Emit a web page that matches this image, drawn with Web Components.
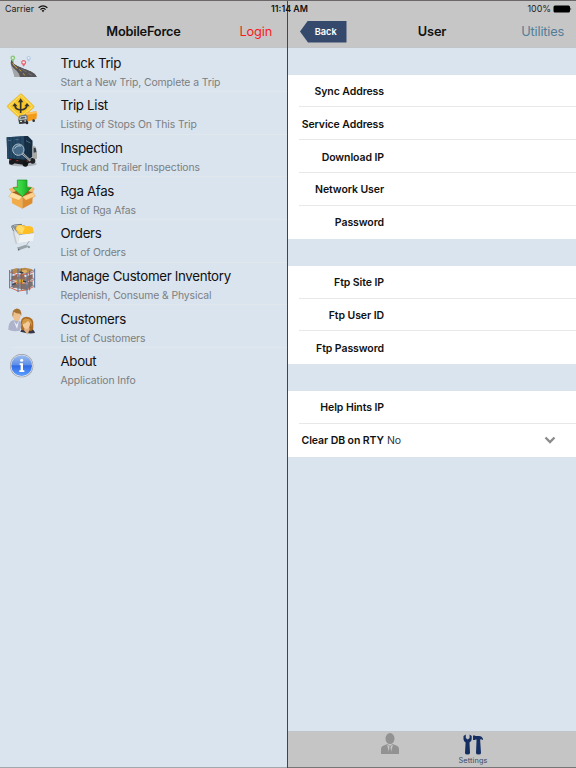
<!DOCTYPE html>
<html lang="en">
<head>
<meta charset="utf-8">
<title>MobileForce</title>
<style>
	body {
		margin: 0;
		background: #dae4ee;
		font-family: Inter, "Liberation Sans", sans-serif;
		color: #111;
	}
</style>
</head>
<body>
<mobile-app></mobile-app>

<script>
// 48x42 icons, drawn on a grid of thirds of a pixel
const icons = {
	road: `
		<path d="M34 36C29 50 35 58 48 65L60 87H110C105 72 84 68 66 60C47 52 36 47 40 39Z" fill="#514f51"/>
		<path d="M34 42C31 60 40 68 43 87H62C59 68 39 62 39 46Z" fill="#a3a5a7"/>
		<path d="M34 36C29 54 41 60 50 68Q58 76 60 87H110C105 72 84 68 66 60C47 52 36 47 40 39Z" fill="#565456"/>
		<path d="M38 45Q42 55 52 61M58 65L64 70M70 76L74 82" stroke="#d9a83a" stroke-width="3" fill="none"/>
		<path d="M63 62L80 72M85 76L96 82" stroke="#aaa" fill="none"/>
		<path d="M38 42L32 32A7 7 0 1 1 45 32Z" fill="#8bc77d"/><circle cx="38.500" cy="30" r="3" fill="#e4f2e5"/>
		<path d="M71 56L64 46A7.500 7.500 0 1 1 78 46Z" fill="#e56870"/><circle cx="71" cy="43" r="3.500" fill="#fae5e9"/>
		<path d="M86 42L80 33A6.500 6.500 0 1 1 92 33Z" fill="#b4cbe4"/><circle cx="86" cy="30" r="3" fill="#e8f3fc"/>`,
	trip: `
		<path d="M60 10Q63 7 66 10L101 44Q104 47 101 50L66 82Q62 86 58 82L23 49Q20 46 23 43Z" fill="#f8c82b" stroke="#ddaa28" stroke-width="1.500"/>
		<path d="M62 13L97 47L62 79L27 46Z" fill="none" stroke="#fff0a4" stroke-width="2"/>
		<path d="M62 66V31M62 57Q45 56 45 43M62 57Q81 55 81 42" fill="none" stroke="#36342c" stroke-width="5"/>
		<path d="M62 22L54 34H70ZM44 36L37 46H53ZM81 36L73 46H89Z" fill="#36342c"/>
		<path d="M75 66L109 61Q112 69 109 84L80 92Z" fill="#f39a19"/><path d="M75 66L109 61L110 67L78 72Z" fill="#ffc257"/>
		<path d="M57 74L77 70L83 75V96L58 99L54 86Z" fill="#777a7b"/>
		<path d="M60 77L78 75L80 84L58 86Z" fill="#d9e1e4"/><path d="M62 79L75 77L77 82L61 84Z" fill="#555c60"/>
		<path d="M57 88H81V96L58 99Z" fill="#383b3c"/><path d="M60 91H66M73 90H78" stroke="#fff" stroke-width="3"/>
		<ellipse cx="81" cy="95" rx="4" ry="5" fill="#252829"/><ellipse cx="101" cy="89" rx="4" ry="4" fill="#333"/>`,
	inspect: `
		<ellipse cx="68" cy="90" rx="42" ry="7" fill="#8e9195" opacity=".6"/>
		<path d="M20 10L83 6L97 20V68L76 82L22 74Z" fill="#203e58"/>
		<path d="M20 10L72 7V79L22 74Z" fill="#244865"/><path d="M72 7L83 6L97 20V68L76 82Z" fill="#162b3e"/>
		<path d="M29 10V73M38 10V74M47 9V76M61 8V77M79 9V79M86 12V73" stroke="#193850" stroke-width="2"/>
		<path d="M24 19H33M46 17H55M78 20L91 27" stroke="#6885a0" stroke-width="2"/>
		<path d="M97 35L107 38L111 54V74L97 76Z" fill="#a9aaa8"/><path d="M101 41L107 43L109 54L101 56Z" fill="#303d4b"/>
		<path d="M27 73L77 77L99 72V82L75 93L31 86Z" fill="#191b1e"/>
		<circle cx="35" cy="84" r="8" fill="#17191c"/><circle cx="76" cy="90" r="8" fill="#111518"/><circle cx="98" cy="81" r="8" fill="#202326"/>
		<path d="M27 77H34M49 80H55M80 81H85" stroke="#ba3730" stroke-width="3"/>
		<circle cx="55" cy="47" r="17" fill="#688eab" fill-opacity=".5" stroke="#b2bfc9" stroke-width="3"/>
		<path d="M44 44Q50 33 63 36" stroke="#adc8dc" stroke-width="3" fill="none"/><path d="M68 59L91 80" stroke="#c9ccce" stroke-width="6"/><path d="M69 60L91 80" stroke="#545b61" stroke-width="3"/>`,
	box: `
		<path d="M35 49L66 39L99 49L67 64Z" fill="#9d5b1d"/>
		<path d="M35 49L67 63V98L36 82Z" fill="#f2ac4b"/><path d="M99 49L67 63V98L97 82Z" fill="#de8d2e"/>
		<path d="M35 49L26 62L57 73L67 62Z" fill="#ffe0a0" stroke="#d59a4d"/>
		<path d="M99 49L106 61L78 73L67 62Z" fill="#ffd18a" stroke="#c98b42"/>
		<path d="M35 49L28 39L50 31L57 42ZM98 49L103 37L83 31L76 42Z" fill="#f4bb68" stroke="#cf9143"/>
		<path d="M52 12H81V35H94L67 62L39 35H52Z" fill="url(#green)" stroke="#159225" stroke-width="2"/>
		<defs><linearGradient id="green" x2="1" y2="0"><stop stop-color="#54e85a"/><stop offset=".5" stop-color="#35cf3c"/><stop offset="1" stop-color="#099920"/></linearGradient></defs>`,
	cart: `
		<path d="M35 22L72 18L104 44L99 66L44 75Z" fill="#dce1e5"/><path d="M35 22L72 18L104 44L59 49Z" fill="#8c9499"/>
		<path d="M42 36L59 49L104 42L99 64L50 73Z" fill="#e4e8eb" stroke="#c3cbd1"/>
		<path d="M48 31Q48 17 58 16L77 21L76 44L56 46Z" fill="#ffc742"/><path d="M65 42L76 22Q89 19 98 25L101 40L82 46Z" fill="#ffbf24"/><path d="M50 31Q52 18 62 19L74 28L66 44Z" fill="#ffdc67"/>
		<path d="M58 48L104 43L99 66L50 73Z" fill="#eff2f4"/>
		<path d="M59 49L53 71" stroke="#c6ced4" stroke-width="1.500"/>
		<path d="M34 22L43 18L66 16M35 23L41 37" stroke="#6d767c" stroke-width="3" fill="none"/>
		<path d="M40 39L49 74" stroke="#c0c7cc" stroke-width="4"/>
		<path d="M88 66L79 79L54 88" fill="none" stroke="#a4aeb5" stroke-width="3"/>
		<path d="M50 86L76 78L91 82L59 93Z" fill="#98a3a9"/><circle cx="56" cy="92" r="2.500" fill="#5f6970"/><circle cx="87" cy="85" r="2.500" fill="#707a80"/>`,
	rack: `
		<path d="M30 29L57 20L104 24L79 36ZM30 53L55 43L104 48L79 61ZM31 74L55 64L103 69L79 85Z" fill="#9b8276"/>
		<path d="M34 23L50 18L56 31L36 36ZM57 20L75 17L98 22L82 32L58 29Z" fill="#b98a4c"/><path d="M61 26L79 23L82 31L67 35Z" fill="#dfb264"/>
		<path d="M34 43L51 38V50L35 55ZM58 39L72 37L76 53L60 51ZM81 42L98 36V48L83 57Z" fill="#926a57"/>
		<path d="M49 54L64 50L73 58L65 67L49 66Z" fill="#e4a824"/><path d="M35 67L47 61L53 74L39 79ZM64 67L77 64L81 82L64 81ZM83 61L98 58V70L84 79Z" fill="#7f7069"/>
		<path d="M29 30L54 39L81 37L104 28M30 55L54 64L80 63L104 52M31 77L54 87L80 84L103 73" fill="none" stroke="#cf5636" stroke-width="2.500"/>
		<path d="M29 24V79M36 22V75M54 18V90M64 20V84M81 32V97M89 26V85M104 20V77" fill="none" stroke="#526f9d" stroke-width="3"/>
		<path d="M54 41L64 49L54 56L64 64L54 75M81 42L89 49L81 57L89 65L81 76" fill="none" stroke="#6b7590" stroke-width="1.500"/>
		<path d="M59 30L70 33M69 57L78 60M37 67L47 65" stroke="#373c49" stroke-width="4"/>`,
	people: `
		<path d="M25 77Q25 53 39 49H54Q64 52 65 62L59 80Q38 84 25 77Z" fill="#aeb2ca"/><path d="M41 50L50 62L57 49L51 75Z" fill="#edf0f6"/>
		<ellipse cx="50" cy="34" rx="12" ry="17" fill="#edc08d"/><path d="M38 39Q34 17 48 14Q65 12 64 36L60 29Q48 29 41 23Q41 32 38 39Z" fill="#a77332"/>
		<path d="M61 83Q62 76 74 71H90Q102 75 105 87Q87 91 61 83Z" fill="#363848"/>
		<path d="M64 63Q58 40 79 38Q104 39 100 67Q101 80 92 81L67 78Q60 77 64 63Z" fill="#ae6d25"/>
		<path d="M74 69L72 79L83 92L89 75L86 65Z" fill="#e5b181"/><ellipse cx="79" cy="60" rx="11" ry="15" fill="#f3cb9b"/>
		<path d="M66 62Q66 42 81 44Q97 44 96 67Q93 59 84 51Q77 59 66 62Z" fill="#d39b45"/>`,
	info: `
		<circle cx="65" cy="56" r="35" fill="#97999e"/><circle cx="65" cy="56" r="33" fill="#e2e6ef"/><circle cx="65" cy="56" r="31" fill="url(#blue)"/>
		<circle cx="65" cy="40" r="4.500" fill="#fff"/><path d="M59 49H69V70H73V75H58V70H62V54H59Z" fill="#fff"/>
		<defs><linearGradient id="blue" x2="0" y2="1"><stop stop-color="#9abcf0"/><stop offset=".48" stop-color="#5b8ce6"/><stop offset=".5" stop-color="#2e68e6"/><stop offset="1" stop-color="#5ea0ff"/></linearGradient></defs>`
};

const menu = [
	["road", "Truck Trip", "Start a New Trip, Complete a Trip"],
	["trip", "Trip List", "Listing of Stops On This Trip"],
	["inspect", "Inspection", "Truck and Trailer Inspections"],
	["box", "Rga Afas", "List of Rga Afas"],
	["cart", "Orders", "List of Orders"],
	["rack", "Manage Customer Inventory", "Replenish, Consume &amp; Physical"],
	["people", "Customers", "List of Customers"],
	["info", "About", "Application Info"]
];

customElements.define("menu-item", class extends HTMLElement {
	constructor() {
		super();
		this.attachShadow({ mode: "open" }).innerHTML = `
			<style>
				:host { display: flex; height: 42.67px; }
				svg { width: 48px; height: 42px; flex: none; margin-right: 12.5px; }
				.copy { padding-top: 5.4px; white-space: nowrap; }
				.name { font-size: 13.3px; line-height: 18px; letter-spacing: -.32px; }
				.detail { font-size: 10.4px; line-height: 14px; margin-top: 4px; color: #7b7e81; letter-spacing: -.1px; }
			</style>
			<svg viewBox="0 0 144 126">${icons[this.getAttribute("icon")]}</svg>
			<div class="copy">
				<div class="name"><slot></slot></div>
				<div class="detail"><slot name="detail"></slot></div>
			</div>`;
	}
});

customElements.define("nav-bar", class extends HTMLElement {
	constructor() {
		super();
		this.attachShadow({ mode: "open" }).innerHTML = `
			<style>
				:host {
					display: grid;
					grid-template-columns: 1fr auto 1fr;
					align-items: center;
					box-sizing: border-box;
					height: 48px;
					padding: 16px 12px 0;
					background: #c6c6c6;
					border-bottom: .5px solid #c1c5ca;
				}
				.title { font-size: 12.8px; font-weight: 600; letter-spacing: -.2px; }
				.end { justify-self: end; font-size: 12.8px; letter-spacing: -.2px; }
			</style>
			<slot name="start"><span></span></slot>
			<span class="title"><slot></slot></span>
			<span class="end"><slot name="end"></slot></span>`;
	}
});

customElements.define("back-button", class extends HTMLElement {
	constructor() {
		super();
		this.attachShadow({ mode: "open" }).innerHTML = `
			<style>
				:host {
					display: block;
					box-sizing: border-box;
					width: 46.5px;
					height: 22px;
					padding-left: 5px;
					background: #34496c;
					clip-path: polygon(0 50%, 8px 0, 100% 0, 100% 100%, 8px 100%);
					color: #fff;
					font: 600 9.2px/22px Inter, sans-serif;
					text-align: center;
				}
			</style>
			<slot></slot>`;
	}
});

customElements.define("form-group", class extends HTMLElement {
	constructor() {
		super();
		this.attachShadow({ mode: "open" }).innerHTML = `
			<style>
				:host { display: block; background: #fff; margin-bottom: 26.6px; }
			</style>
			<slot></slot>`;
	}
});

customElements.define("form-row", class extends HTMLElement {
	constructor() {
		super();
		this.attachShadow({ mode: "open" }).innerHTML = `
			<style>
				:host { display: block; height: 32.9px; padding-left: 11px; }
				.row {
					display: flex;
					align-items: center;
					box-sizing: border-box;
					height: 100%;
					padding: 1.5px 20px 0 0;
					border-bottom: 1px solid #e8e8e9;
					font-size: 10.5px;
					letter-spacing: -.08px;
					white-space: nowrap;
				}
				:host(:last-child) .row { border-color: transparent; }
				.label { width: 85px; display: flex; justify-content: flex-end; font-weight: 600; }
				.value { margin-left: 3px; flex: 1; color: #333; }
			</style>
			<div class="row">
				<span class="label">${this.getAttribute("label")}</span>
				<span class="value"><slot></slot></span>
				<slot name="end"></slot>
			</div>`;
	}
});

customElements.define("status-bar", class extends HTMLElement {
	constructor() {
		super();
		this.attachShadow({ mode: "open" }).innerHTML = `
			<style>
				/* floats over both panes */
				:host {
					position: absolute;
					inset: 0 0 auto;
					display: grid;
					grid-template-columns: 1fr auto 1fr;
					align-items: center;
					height: 16px;
					padding: 0 4px 0 5px;
					border-top: 1px solid #6b6768;
					box-sizing: border-box;
					font-size: 8.9px;
					color: #222;
				}
				div { display: flex; align-items: center; gap: 3.5px; }
				b { font-weight: 600; color: #111; margin-left: 2px; }
				.right { justify-content: flex-end; gap: 2px; }
			</style>
			<div>Carrier
				<svg width="10" height="8" viewBox="0 0 10 8" fill="none" stroke="#111" stroke-width="1.200"><path d="M.6 2.800Q5-1 9.400 2.800M2.400 4.600Q5 2.300 7.600 4.600"/><path d="M3.600 5.600Q5 4.500 6.400 5.600L5 7.300Z" fill="#111" stroke="none"/></svg>
			</div>
			<b>11:14 AM</b>
			<div class="right">100%
				<svg width="19" height="8" viewBox="0 0 19 8"><rect x=".5" y=".5" width="16.500" height="7" rx="1.500"/><path d="M17.500 2.500Q19 4 17.500 5.500Z"/></svg>
			</div>`;
	}
});

customElements.define("tab-bar", class extends HTMLElement {
	constructor() {
		super();
		this.attachShadow({ mode: "open" }).innerHTML = `
			<style>
				:host {
					display: flex;
					justify-content: center;
					box-sizing: border-box;
					height: 37.500px;
					padding-right: 1px;
					background: #c5c5c5;
					border-top: .5px solid #bfc4c8;
					border-bottom: 1px solid #777577;
				}
				div { width: 83px; display: flex; flex-direction: column; align-items: center; padding-top: 1.5px; font-size: 7.3px; line-height: 9px; letter-spacing: .15px; color: #34496c; }
				svg { display: block; margin-bottom: 1px; }
			</style>
			<div>
				<svg width="20" height="22" viewBox="0 0 20 22" fill="#929292"><ellipse cx="10" cy="5.600" rx="4.500" ry="5.500"/><path d="M1 21V16Q1 13 5 12L7.500 11L10 13L12.500 11L15 12Q19 13 19 16V21Z"/><path d="M7 11.500L9.300 20.500L10 14L10.700 20.500L13 11.500L10 13.500Z" fill="#c5c5c5"/><path d="M9.200 13H10.800L10.500 14.500L11.200 19L10 21L8.800 19L9.500 14.500Z"/></svg>
			</div>
			<div>
				<svg width="20" height="22" viewBox="0 0 20 22" fill="#152f62"><path d="M2.800 1.500L.5 3V6.500Q.8 8.500 2.600 9.500L2 20Q2 21.500 4.500 21.500Q7 21.500 7 20L6.500 9.500Q8.700 8.200 8.700 6.200V3L6.600 1.500V5L4.700 6.500L2.800 5Z"/><path d="M10 2.500H12L12.500 3H16Q19 3 20 6V7Q18.500 6.200 17.200 6.400V8L18 20Q18 21.500 15.500 21.500Q13 21.500 13 20L13.500 8V6.500H12.500L12 7H10Z"/></svg>
				Settings
			</div>`;
	}
});

customElements.define("mobile-app", class extends HTMLElement {
	constructor() {
		super();
		this.attachShadow({ mode: "open" }).innerHTML = `
			<style>
				:host { position: relative; display: grid; grid-template-columns: 287px 288px; column-gap: 1px; height: 768px; overflow: hidden; background: #3e474f; }
				section { display: flex; flex-direction: column; background: #dae4ee; min-width: 0; }
				.items { padding-top: .33px; }
				menu-item + menu-item { background: linear-gradient(#e1e8eb, #e1e8eb) 12px 0 / 100% 1px no-repeat; }
				.form { flex: 1; padding-top: 26.600px; }
				.login { color: #f8191d; margin-right: 3px; }
				.utilities { color: #527d98; }
				.master { border-bottom: 1px solid #a3a8ad; }
			</style>
			<section class="master">
				<nav-bar>MobileForce<span class="login" slot="end">Login</span></nav-bar>
				<div class="items">
					${menu.map(([icon, name, detail]) => `<menu-item icon="${icon}">${name}<span slot="detail">${detail}</span></menu-item>`).join("")}
				</div>
			</section>
			<section>
				<nav-bar><back-button slot="start">Back</back-button>User<span class="utilities" slot="end">Utilities</span></nav-bar>
				<div class="form">
					<form-group>
						<form-row label="Sync Address"></form-row>
						<form-row label="Service Address"></form-row>
						<form-row label="Download IP"></form-row>
						<form-row label="Network User"></form-row>
						<form-row label="Password"></form-row>
					</form-group>
					<form-group>
						<form-row label="Ftp Site IP"></form-row>
						<form-row label="Ftp User ID"></form-row>
						<form-row label="Ftp Password"></form-row>
					</form-group>
					<form-group>
						<form-row label="Help Hints IP"></form-row>
						<form-row label="Clear DB on RTY">No
							<svg slot="end" width="12" height="8" viewBox="0 0 12 8" fill="none" stroke="#8c8c8c" stroke-width="2.400"><path d="M1.500 1.500L6 6L10.500 1.500"/></svg>
						</form-row>
					</form-group>
				</div>
				<tab-bar></tab-bar>
			</section>
			<status-bar></status-bar>`;
	}
});
</script>
</body>
</html>
